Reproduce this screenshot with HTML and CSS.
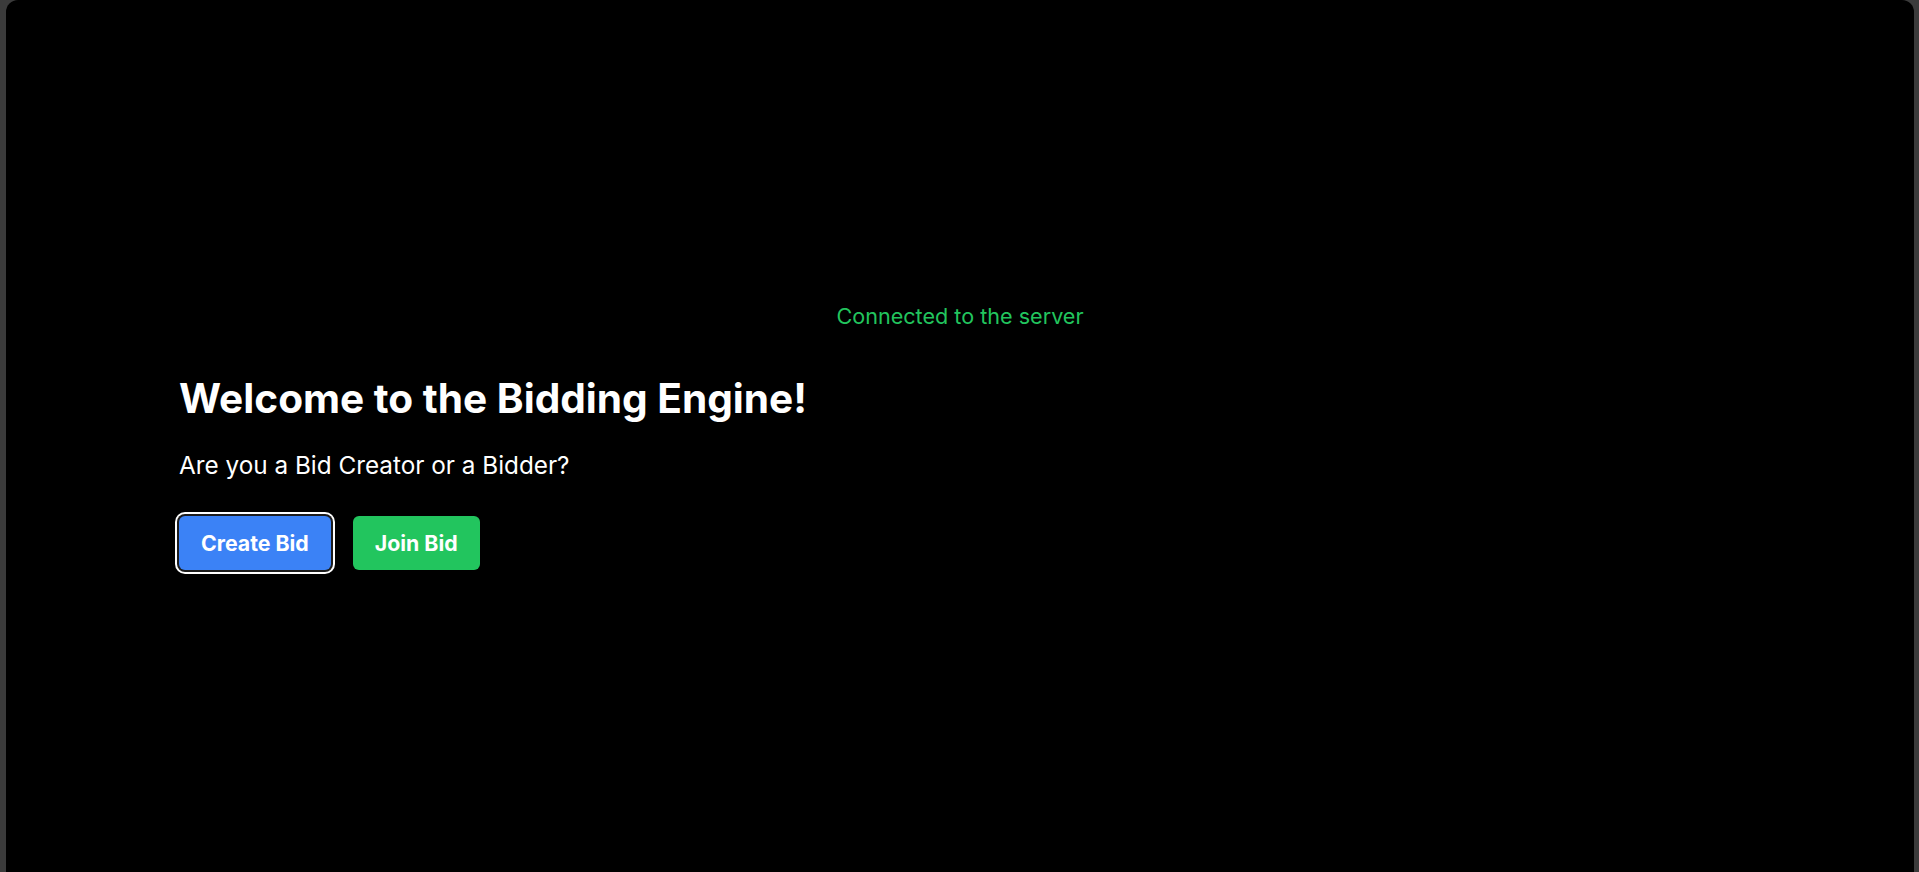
FILE: index.html
```html
<!DOCTYPE html>
<html lang="en">
<head>
<meta charset="utf-8">
<title>Bidding Engine</title>
<link rel="stylesheet" href="styles.css">
</head>
<body>
<div class="frame">
  <p class="status">Connected to the server</p>
  <main class="content">
    <h1 class="title">Welcome to the Bidding Engine!</h1>
    <p class="subtitle">Are you a Bid Creator or a Bidder?</p>
    <div class="actions">
      <button class="btn btn-blue is-focused" type="button">Create Bid</button>
      <button class="btn btn-green" type="button">Join Bid</button>
    </div>
  </main>
</div>
</body>
</html>
```
FILE: styles.css
```css
* { box-sizing: border-box; }
html, body {
  margin: 0;
  padding: 0;
  height: 100%;
}
body {
  background: #3b3b3b;
  font-family: Inter, "Noto Sans", "Liberation Sans", sans-serif;
  color: #fff;
  overflow: hidden;
}
.frame {
  margin: 0 5px 0 6px;
  height: 100vh;
  background: #000;
  border-radius: 12px 12px 0 0;
  display: flex;
  flex-direction: column;
}
.status {
  margin: 302px 0 0;
  text-align: center;
  font-size: 21.6px;
  line-height: 28px;
  color: #22c55e;
}
.content {
  padding-left: 173px;
  display: flex;
  flex-direction: column;
  align-items: flex-start;
}
.title {
  margin: 45px 0 0;
  font-size: 40.6px;
  line-height: 48px;
  font-weight: 700;
}
.subtitle {
  margin: 28px 0 0;
  font-size: 24.3px;
  line-height: 28px;
}
.actions {
  margin-top: 37px;
  display: flex;
  gap: 22px;
}
.btn {
  height: 54px;
  padding: 0 22px;
  border: none;
  border-radius: 6px;
  font-family: inherit;
  font-size: 21.3px;
  font-weight: 700;
  color: #fff;
  cursor: pointer;
}
.btn-blue { background: #3b82f6; }
.btn-green { background: #22c55e; }
.is-focused {
  box-shadow: 0 0 0 2px #1c1c1c, 0 0 0 4px #fff;
}
```
